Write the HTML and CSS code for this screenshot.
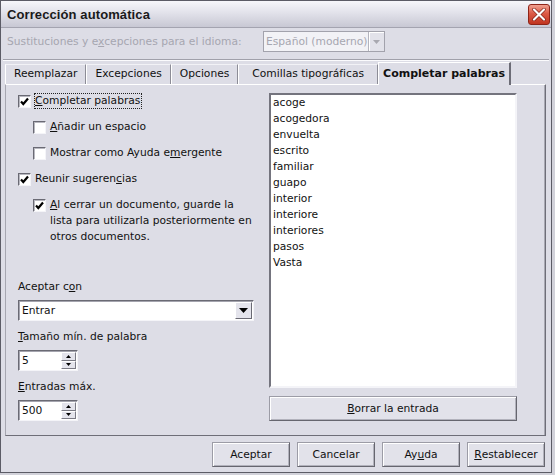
FILE: index.html
```html
<!DOCTYPE html>
<html lang="es">
<head>
<meta charset="utf-8">
<title>Corrección automática</title>
<link rel="stylesheet" href="styles.css">
</head>
<body>
<div class="window">
  <div class="titlebar">
    <span class="title">Corrección automática</span>
    <span class="close">
      <svg width="14" height="13" viewBox="0 0 14 13"><path d="M2 1.5 L12 11.5 M12 1.5 L2 11.5" stroke="#7a1a10" stroke-width="3.4" stroke-linecap="round"/><path d="M2 1.5 L12 11.5 M12 1.5 L2 11.5" stroke="#fff" stroke-width="2.2" stroke-linecap="round"/></svg>
    </span>
  </div>
  <div class="langrow">
    <span class="lang-label">Sustituciones y e<u>x</u>cepciones para el idioma:</span>
    <div class="combo">
      <span class="combo-text">Español (moderno)</span>
      <span class="combo-btn"><svg width="7" height="4" viewBox="0 0 7 4"><path d="M0 0 H7 L3.5 4 Z" fill="#a8a8b0"/></svg></span>
    </div>
  </div>
  <div class="sep"></div>
  <div class="tabs">
    <span class="tab">Reemplazar</span>
    <span class="tab">Excepciones</span>
    <span class="tab">Opciones</span>
    <span class="tab tab-wide">Comillas tipográficas</span>
    <span class="tab tab-active">Completar palabras</span>
  </div>
  <div class="panel">
    <div class="leftcol">
      <div class="check-row">
        <span class="cb"><svg width="11" height="11" viewBox="0 0 11 11"><path d="M2 5.5 L4.3 8 L9 2.5" fill="none" stroke="#000" stroke-width="2.2"/></svg></span>
        <span class="lbl focus"><u>C</u>ompletar palabras</span>
      </div>
      <div class="check-row indent">
        <span class="cb"></span>
        <span class="lbl"><u>A</u>ñadir un espacio</span>
      </div>
      <div class="check-row indent">
        <span class="cb"></span>
        <span class="lbl">Mostrar como Ayuda e<u>m</u>ergente</span>
      </div>
      <div class="check-row">
        <span class="cb"><svg width="11" height="11" viewBox="0 0 11 11"><path d="M2 5.5 L4.3 8 L9 2.5" fill="none" stroke="#000" stroke-width="2.2"/></svg></span>
        <span class="lbl">Reunir sugeren<u>c</u>ias</span>
      </div>
      <div class="check-row indent">
        <span class="cb"><svg width="11" height="11" viewBox="0 0 11 11"><path d="M2 5.5 L4.3 8 L9 2.5" fill="none" stroke="#000" stroke-width="2.2"/></svg></span>
        <span class="lbl wrap"><u>A</u>l cerrar un documento, guarde la lista para utilizarla posteriormente en otros documentos.</span>
      </div>

      <div class="fields">
        <div class="field-label">Aceptar c<u>o</u>n</div>
        <div class="select">
          <span class="field-text">Entrar</span>
          <span class="select-btn"><svg width="9" height="5" viewBox="0 0 9 5"><path d="M0 0 H9 L4.5 5 Z" fill="#000"/></svg></span>
        </div>
        <div class="field-label"><u>T</u>amaño mín. de palabra</div>
        <div class="spin">
          <span class="field-text">5</span>
          <span class="spin-btns">
            <span class="spin-btn"><svg width="5" height="3" viewBox="0 0 5 3"><path d="M0 3 H5 L2.5 0 Z" fill="#000"/></svg></span>
            <span class="spin-btn"><svg width="5" height="3" viewBox="0 0 5 3"><path d="M0 0 H5 L2.5 3 Z" fill="#000"/></svg></span>
          </span>
        </div>
        <div class="field-label"><u>E</u>ntradas máx.</div>
        <div class="spin last">
          <span class="field-text">500</span>
          <span class="spin-btns">
            <span class="spin-btn"><svg width="5" height="3" viewBox="0 0 5 3"><path d="M0 3 H5 L2.5 0 Z" fill="#000"/></svg></span>
            <span class="spin-btn"><svg width="5" height="3" viewBox="0 0 5 3"><path d="M0 0 H5 L2.5 3 Z" fill="#000"/></svg></span>
          </span>
        </div>
      </div>
    </div>
    <div class="rightcol">
      <ul class="list">
        <li>acoge</li>
        <li>acogedora</li>
        <li>envuelta</li>
        <li>escrito</li>
        <li>familiar</li>
        <li>guapo</li>
        <li>interior</li>
        <li>interiore</li>
        <li>interiores</li>
        <li>pasos</li>
        <li>Vasta</li>
      </ul>
      <div class="btn btn-wide"><u>B</u>orrar la entrada</div>
    </div>
  </div>
  <div class="buttons">
    <div class="btn">Aceptar</div>
    <div class="btn">Cancelar</div>
    <div class="btn">Ay<u>u</u>da</div>
    <div class="btn"><u>R</u>establecer</div>
  </div>
</div>
</body>
</html>
```
FILE: styles.css
```css
* { box-sizing: border-box; }
html, body { margin: 0; padding: 0; }
body {
  background: #d2d2da;
  font-family: "DejaVu Sans", sans-serif;
  font-size: 10.7px;
  color: #111;
}
u { text-decoration: underline; text-underline-offset: 1px; }

.window {
  width: 552px;
  height: 473px;
  border: 1px solid #5c5c66;
  background: #dddde6;
  display: flex;
  flex-direction: column;
}

.titlebar {
  height: 27px;
  flex: none;
  display: flex;
  align-items: center;
  justify-content: space-between;
  padding: 0 1px 0 6px;
  background: linear-gradient(#f7f7fb, #e2e2ea 45%, #c8c8d4);
  border-bottom: 1px solid #a4a4b0;
}
.title {
  font-family: "Liberation Sans", sans-serif;
  font-weight: bold;
  font-size: 13px;
  color: #1a1a1a;
  letter-spacing: 0.1px;
}
.close {
  width: 22px;
  height: 21px;
  margin-top: 1px;
  border-radius: 3px;
  border: 1px solid #8e2418;
  background: linear-gradient(#f0a090, #dc5a46 45%, #c03420);
  display: flex;
  align-items: center;
  justify-content: center;
}

.langrow {
  height: 31px;
  flex: none;
  display: flex;
  align-items: flex-start;
  padding: 3px 0 0 6px;
}
.lang-label {
  width: 256px;
  line-height: 21px;
  color: #a6a6b0;
  white-space: nowrap;
}
.combo {
  width: 122px;
  height: 21px;
  display: flex;
  border: 1px solid #a2a2ac;
  background: #f2f2f6;
}
.combo-text {
  flex: 1;
  padding-left: 2px;
  line-height: 19px;
  color: #a6a6b0;
  white-space: nowrap;
  overflow: hidden;
}
.combo-btn {
  width: 16px;
  display: flex;
  align-items: center;
  justify-content: center;
  background: #e2e2ea;
  border-left: 1px solid #b4b4be;
  box-shadow: inset 1px 1px 0 #fff;
}

.sep {
  height: 2px;
  flex: none;
  margin: 0 2px;
  border-top: 1px solid #a0a0aa;
  border-bottom: 1px solid #fbfbfd;
}

.tabs {
  position: relative;
  z-index: 1;
  height: 24px;
  flex: none;
  display: flex;
  align-items: flex-end;
  padding-left: 4px;
  margin-bottom: -1px;
}
.tab {
  height: 20px;
  margin-bottom: 1px;
  padding: 0 8px;
  line-height: 18px;
  white-space: nowrap;
  border-top: 1px solid #f2f2f6;
  border-left: 1px solid #fff;
  border-right: 1px solid #8c8c96;
}
.tab-wide { padding: 0 13px; }
.tab-active {
  height: 23px;
  margin-bottom: 0;
  padding: 0 4px;
  line-height: 21px;
  font-weight: bold;
  font-size: 11px;
  background: #dddde6;
  border-top: 1px solid #fff;
  border-left: 1px solid #fff;
  border-right: 2px solid #6c6c76;
}

.panel {
  height: 352px;
  flex: none;
  margin: 0 5px 0 4px;
  display: flex;
  padding: 8px 28px 14px 12px;
  border: 1px solid;
  border-color: #fff #6e6e78 #6e6e78 #a6a6b0;
  box-shadow: inset -1px 0 0 #a8a8b2;
}

.leftcol {
  width: 236px;
  flex: none;
  display: flex;
  flex-direction: column;
}
.check-row {
  display: flex;
  align-items: flex-start;
  line-height: 16px;
  margin-bottom: 10px;
}
.indent { margin-left: 15px; }
.cb {
  width: 13px;
  height: 13px;
  flex: none;
  margin: 2px 3px 0 0;
  background: #fff;
  border: 1px solid;
  border-color: #6a6a74 #f4f4f8 #f4f4f8 #6a6a74;
  box-shadow: inset 1px 1px 0 #b8b8c0;
  display: flex;
  align-items: center;
  justify-content: center;
}
.lbl { padding: 0 1px; white-space: nowrap; }
.lbl.wrap { white-space: normal; width: 205px; }
.focus { outline: 1px dotted #222; outline-offset: -1px; padding: 0 2px 0 1px; }

.fields {
  margin-top: auto;
  display: flex;
  flex-direction: column;
}
.field-label { line-height: 16px; margin-bottom: 5px; }
.select, .spin {
  height: 21px;
  display: flex;
  background: #fff;
  border: 1px solid;
  border-color: #6a6a74 #f4f4f8 #f4f4f8 #6a6a74;
  box-shadow: inset 1px 1px 0 #a4a4ae;
  margin-bottom: 8px;
  padding: 1px 1px 1px 2px;
}
.spin { width: 60px; }
.spin.last { margin-bottom: 0; }
.field-text { flex: 1; line-height: 17px; padding-left: 1px; }
.select-btn {
  width: 17px;
  display: flex;
  align-items: center;
  justify-content: center;
  background: #e4e4ec;
  border: 1px solid;
  border-color: #fff #6a6a74 #6a6a74 #fff;
}
.spin-btns {
  width: 15px;
  display: flex;
  flex-direction: column;
}
.spin-btn {
  flex: 1;
  display: flex;
  align-items: center;
  justify-content: center;
  background: #e4e4ec;
  border: 1px solid;
  border-color: #fff #7a7a84 #7a7a84 #fff;
}

.rightcol {
  width: 248px;
  flex: none;
  margin-left: 15px;
  display: flex;
  flex-direction: column;
}
.list {
  flex: 1;
  margin: 0 0 8px 0;
  padding: 0 0 0 2px;
  list-style: none;
  background: #fff;
  border: 2px solid;
  border-color: #74747e #f4f4f8 #f4f4f8 #74747e;
}
.list li { line-height: 16px; }

.btn {
  height: 25px;
  display: flex;
  align-items: center;
  justify-content: center;
  background: #e2e2ea;
  border: 1px solid;
  border-color: #9c9ca6 #66666f #66666f #9c9ca6;
  box-shadow: inset 1px 1px 0 #fff, inset -1px -1px 0 #b2b2bc;
  white-space: nowrap;
}
.btn-wide { width: 248px; }

.buttons {
  display: flex;
  justify-content: flex-end;
  gap: 7px;
  margin-top: 6px;
  padding-right: 6px;
}
.buttons .btn { width: 78px; }
```
